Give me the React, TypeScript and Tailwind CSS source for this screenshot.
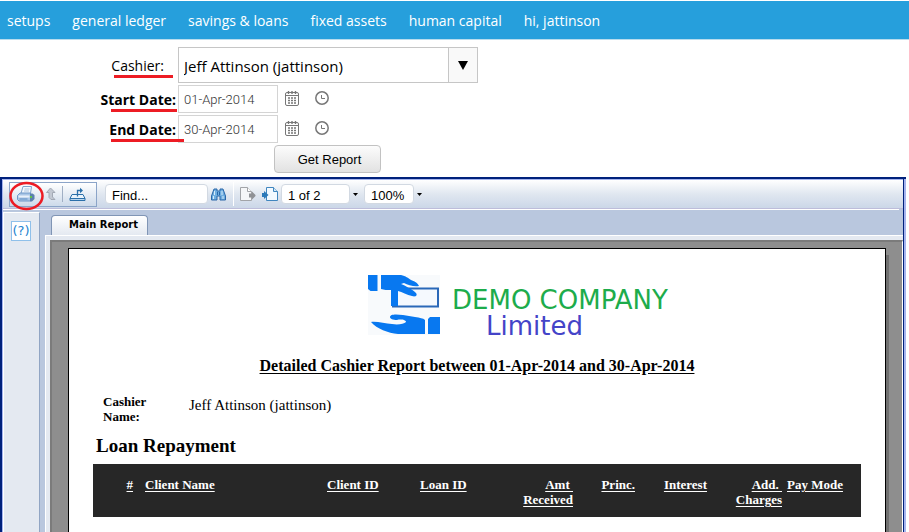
import React from "react";

const menu = ["setups", "general ledger", "savings & loans", "fixed assets", "human capital", "hi, jattinson"];

function CalendarIcon() {
  return (
    <svg width="14" height="15" viewBox="0 0 14 15" fill="none" stroke="#777" aria-hidden="true">
      <rect x="0.5" y="1.5" width="13" height="13" rx="1.5" />
      <path d="M1 4.5h12" />
      <path d="M3.5 0v3M7 0v3M10.5 0v3" strokeWidth="1.4" />
      <path d="M3 7h2M6 7h2M9 7h2M3 9.5h2M6 9.5h2M9 9.5h2M3 12h2M6 12h2M9 12h2" strokeWidth="1.4" />
    </svg>
  );
}

function ClockIcon() {
  return (
    <svg width="14" height="14" viewBox="0 0 14 14" fill="none" stroke="#777" aria-hidden="true">
      <circle cx="7" cy="7" r="6.2" strokeWidth="1.5" />
      <path d="M6.5 4v3.5h3.5" />
    </svg>
  );
}

function DateRow({ id, label, value, markClass }: { id: string; label: string; value: string; markClass: string }) {
  return (
    <div className="flex h-7 items-center">
      <div className="relative w-[178px] shrink-0 pr-0.5 text-right">
        <label htmlFor={id} className="text-sm font-bold text-black">{label}</label>
        <span className={markClass} />
      </div>
      <input
        id={id}
        defaultValue={value}
        className="h-7 w-[100px] border border-[#d4d4d4] bg-white px-[5px] font-['Roboto',sans-serif] text-[13px] font-light text-[#333] outline-none"
      />
      <div className="ml-[7px] flex items-center gap-4 pb-0.5">
        <button aria-label={"Open calendar, " + label}><CalendarIcon /></button>
        <button aria-label={"Open time list, " + label}><ClockIcon /></button>
      </div>
    </div>
  );
}

function PrintIcon() {
  return (
    <svg width="18" height="16" viewBox="0 0 18 16" aria-hidden="true">
      <path d="M4 7.500 6 .5h8.500l-1 7z" fill="#f3f8fd" stroke="#7ea3cc" />
      <path d="M7.500 3h5M7 5h5" stroke="#a9c4e0" />
      <path d="M.5 9.500 3 7h10.500V15H2L.5 13.500z" fill="#a9c6e6" stroke="#6f98c8" />
      <path d="M13 7.500h2.500l2 1.500v4L15 15.500h-2z" fill="#5a7fae" />
      <path d="M1.500 9.500h11v2h-11z" fill="#e8f1fa" />
      <path d="M2.500 13h8" stroke="#5f8fc4" />
      <rect x="13" y="10" width="2" height="2" fill="#5fc04a" />
    </svg>
  );
}

function UpIcon() {
  return (
    <svg width="10" height="14" viewBox="0 0 10 14" aria-hidden="true">
      <path d="M4.500 1 9 5.500H6.500V10l2.500 2.500H5L3 10.500v-5H.5z" fill="#c2c8d2" stroke="#a2a9b5" />
    </svg>
  );
}

function ExportIcon() {
  return (
    <svg width="17" height="15" viewBox="0 0 17 15" fill="none" stroke="#2b70aa" aria-hidden="true">
      <path d="M3 7.500h11l2 4H1z" fill="#e9f3fb" />
      <path d="M1 11.500h15v2H1z" fill="#b8d5ee" />
      <path d="M8.500 9.500v-6h4" strokeWidth="1.3" />
      <path d="m11 .8 3 2.700-3 2.700z" fill="#2b70aa" stroke="none" />
    </svg>
  );
}

function BinocularsIcon() {
  return (
    <svg width="15" height="13" viewBox="0 0 15 13" aria-hidden="true">
      <path d="M3 1h3v2h3V1h3l2.500 7v4H9V8H6v4H.5V8z" fill="#6faee0" stroke="#2a67a8" />
      <path d="M3.500 3v4M11 3v4M2.500 8v3M12 8v3" stroke="#d5ebfa" />
      <path d="M6.500 4v3M8.500 4v3" stroke="#2a67a8" />
    </svg>
  );
}

function PrevPageIcon() {
  return (
    <svg width="16" height="14" viewBox="0 0 16 14" aria-hidden="true">
      <path d="M.5.5h7l4 4v9H.5z" fill="#f5f6f8" stroke="#a2a4a8" />
      <path d="M7.500.5v4h4" fill="#fff" stroke="#a2a4a8" />
      <path d="M9 6.500h3V4.500L15.500 8v1L12 12.500v-2H9z" fill="#8f9195" />
    </svg>
  );
}

function NextPageIcon() {
  return (
    <svg width="16" height="14" viewBox="0 0 16 14" aria-hidden="true">
      <path d="M4.500.5h7l4 4v9h-11z" fill="#f2f9ff" stroke="#4086bf" />
      <path d="M11.500.5v4h4" fill="#d2e8f8" stroke="#4086bf" />
      <path d="M0 6h2V4l4.500 4L2 12v-2H0z" fill="#2b79b9" />
    </svg>
  );
}

function HandsLogo() {
  return (
    <svg className="shrink-0" width="72" height="60" viewBox="0 0 72 60" aria-hidden="true">
      <rect width="72" height="60" fill="#f8fafc" />
      <path d="M25 13.500h45v18H25z" fill="#f5f9fe" stroke="#2a68b8" strokeWidth="2" />
      <path d="M0 0h9.500v16H2.500L0 14z" fill="#0878f0" />
      <path d="M13 0h20c5 1 7 3 10 5 3 1 7 3 8 6-5 1-11-1-15-3l-3 1c5 2 12 6 15 9 2 3-1 4-4 3-5-1-10-4-14-5v15h-7V15c-4 0-7 0-10-1z" fill="#0878f0" />
      <path d="M22 42c0-3 6-3 13-2l12 2c5 1 8 1 10 3v14H30c-10-1-21-5-27-12 6-1 14 2 21 2 6 1 12 0 14-2 0-2-5-3-9-2-4 0-7-1-7-3z" fill="#0878f0" />
      <path d="M62 42h10v17H60V44z" fill="#0878f0" />
    </svg>
  );
}

function DropArrow() {
  return (
    <svg width="5" height="3" viewBox="0 0 5 3" aria-hidden="true"><path d="M0 0h5L2.500 3z" fill="#000" /></svg>
  );
}

function ReportPage() {
  return (
    <div className="relative ml-4 mr-4 mt-1.5 flex-1 border border-b-0 border-black bg-white px-6 font-['Liberation_Serif',serif] text-black">
      <span className="absolute -right-1 bottom-0 top-1.5 w-[3px] bg-[#707070]" />
      <div className="ml-[275px] mt-[26px] flex h-[67px] w-[306px] overflow-hidden whitespace-nowrap">
        <HandsLogo />
        <div className="ml-3 font-['DejaVu_Sans',sans-serif] text-[26px] leading-[26px]">
          <div className="pt-3 text-[#1dac4b]">DEMO COMPANY</div>
          <div className="pl-[34px] text-[#4444c8]">Limited</div>
        </div>
      </div>
      <h1 className="mt-[14px] text-center text-base font-bold leading-5 underline underline-offset-2">
        Detailed Cashier Report between 01-Apr-2014 and 30-Apr-2014
      </h1>
      <div className="mt-[18px] flex pl-[10px]">
        <div className="w-[86px] text-[13px] font-bold leading-[15px]">Cashier<br />Name:</div>
        <div className="pt-px text-[15px] leading-5">Jeff Attinson (jattinson)</div>
      </div>
      <h2 className="mt-[10px] pl-[3px] text-[19px] font-bold leading-6">Loan Repayment</h2>
      <table className="mt-1.5 h-[53px] w-full table-fixed bg-[#272727] text-[13px] leading-[15px] text-white">
        <thead>
          <tr className="align-top underline underline-offset-2 [&>th]:px-0 [&>th]:pt-[13px]">
            <th className="w-10 text-right">#</th>
            <th className="text-left"><span className="ml-3">Client Name</span></th>
            <th className="w-[93px] text-left">Client ID</th>
            <th className="w-20 text-left">Loan ID</th>
            <th className="w-[73px] text-right">Amt&nbsp;<br />Received</th>
            <th className="w-[62px] text-right">Princ.</th>
            <th className="w-[72px] text-right">Interest</th>
            <th className="w-[75px] text-right">Add.&nbsp;<br />Charges</th>
            <th className="w-[79px] text-left"><span className="ml-[5px]">Pay Mode</span></th>
          </tr>
        </thead>
      </table>
    </div>
  );
}

function Viewer() {
  return (
    <section className="mr-[3px] mt-1 flex flex-1 border-l-2 border-t-2 border-[#00217c]">
      <div className="flex min-w-0 flex-1 flex-col border-l border-t border-[#a5b4ee] bg-[#b9c7de] font-['Liberation_Sans',sans-serif] text-[13px] text-black">
        <div className="flex h-[29px] shrink-0 items-center border-b border-[#bdbdda] bg-linear-to-b from-white via-[#e0e7f0] to-[#cbd7e8] pl-1.5">
          <div className="relative flex h-[25px] w-[88px] items-center border border-[#8ba4c8] bg-linear-to-b from-white to-[#cddaea] pl-[7px]">
            <button aria-label="Print report"><PrintIcon /></button>
            <svg className="pointer-events-none absolute -left-px -top-0.5" width="36" height="30" viewBox="0 0 36 30" aria-hidden="true">
              <ellipse cx="17.500" cy="15" rx="16" ry="13" fill="none" stroke="#ed1c24" strokeWidth="2.500" />
            </svg>
            <button aria-label="Go to parent" className="ml-[11px]"><UpIcon /></button>
            <span className="ml-1.5 h-4 w-px bg-[#a0afc4]" />
            <button aria-label="Export" className="ml-1.5"><ExportIcon /></button>
          </div>
          <input aria-label="Find" defaultValue="Find..." className="ml-2 h-5 w-[103px] rounded-sm border border-[#d2d9e2] bg-white px-1.5 pt-0.5 outline-none" />
          <button aria-label="Search" className="ml-[3px]"><BinocularsIcon /></button>
          <span className="ml-[7px] h-6 w-px bg-white" />
          <button aria-label="Previous page" className="ml-1.5"><PrevPageIcon /></button>
          <button aria-label="Next page" className="ml-1.5"><NextPageIcon /></button>
          <input aria-label="Page" defaultValue="1 of 2" className="ml-[3px] h-5 w-[69px] rounded-sm border border-[#d2d9e2] bg-white px-1.5 pt-0.5 outline-none" />
          <button aria-label="Choose page" className="ml-0.5 p-px"><DropArrow /></button>
          <input aria-label="Zoom" defaultValue="100%" className="ml-[5px] h-5 w-[50px] rounded-sm border border-[#d2d9e2] bg-white px-1.5 pt-0.5 outline-none" />
          <button aria-label="Choose zoom" className="ml-0.5 p-px"><DropArrow /></button>
        </div>
        <div className="mr-1 h-px shrink-0 bg-white" />
        <div className="flex flex-1 pt-0.5">
          <div className="w-[37px] shrink-0 border-l border-r border-t border-l-white border-r-[#91a5c4] border-t-white bg-[#e4e9f1] pl-[7px] pt-2">
            <button aria-label="Help" className="flex h-5 w-5 items-center justify-center border border-[#8fc0ea] bg-white font-['DejaVu_Sans',sans-serif] text-[13px] text-[#2383cf]">(?)</button>
          </div>
          <div className="ml-[5px] flex min-w-0 flex-1 flex-col">
            <div className="flex h-[23px] shrink-0 items-end pl-1.5">
              <button className="h-5 w-[97px] rounded-t-sm border border-b-0 border-[#8095b5] bg-linear-to-b from-white to-[#e4e9f1] pb-0.5 pl-2 font-['DejaVu_Sans',sans-serif] text-[10px] font-bold">Main Report</button>
            </div>
            <div className="flex flex-1 flex-col border-l border-t border-white bg-[#e4e9f1] pl-1 pt-1">
              <div className="flex flex-1 flex-col border-l-2 border-r border-t-2 border-l-[#7b7b7b] border-r-white border-t-[#7b7b7b] bg-[#8e8e8e]">
                <ReportPage />
              </div>
            </div>
          </div>
        </div>
      </div>
      <div className="-mt-0.5 w-[3px] border-l border-t-2 border-[#00217c] bg-[#a5b4ee]" />
    </section>
  );
}

export default function App() {
  return (
    <main className="flex min-h-screen flex-col bg-white font-['Open_Sans',sans-serif]">
      <nav className="mt-px flex h-[39px] items-center gap-[22px] whitespace-nowrap border-b border-[#b8dced] bg-[#269fdc] pl-[7px] pt-0.5 text-sm text-white">
        {menu.map((item) => (
          <a key={item} href="#">{item}</a>
        ))}
      </nav>
      <form className="mt-[7px] flex flex-col gap-0.5" onSubmit={(e) => e.preventDefault()}>
        <div className="flex h-9 items-center">
          <div className="relative w-[178px] shrink-0 pr-[14px] text-right">
            <label htmlFor="cashier" className="text-sm text-black">Cashier:</label>
            <span className="absolute -bottom-px right-[5px] h-[3px] w-[59px] bg-[#ed1c24]" />
          </div>
          <div className="relative flex h-9 w-[300px] border border-[#c6c6c6]">
            <select id="cashier" className="w-full appearance-none bg-white px-[5px] pt-0.5 text-[15px] text-black outline-none">
              <option>Jeff Attinson (jattinson)</option>
            </select>
            <span className="pointer-events-none absolute inset-y-0 right-0 flex w-[29px] items-center justify-center border-l border-[#c6c6c6] bg-[#f9f9f9]">
              <svg width="10" height="9" viewBox="0 0 10 9" aria-hidden="true"><path d="M0 0h10L5 9z" fill="#000" /></svg>
            </span>
          </div>
        </div>
        <DateRow id="start" label="Start Date:" value="01-Apr-2014" markClass="absolute -bottom-px right-px h-[3px] w-[66px] bg-[#ed1c24]" />
        <DateRow id="end" label="End Date:" value="30-Apr-2014" markClass="absolute -bottom-px -right-1.5 h-[3px] w-[73px] bg-[#ed1c24]" />
        <div className="pl-[274px]">
          <button className="block h-7 w-[107px] rounded-sm border border-[#c2c2c2] bg-linear-to-b from-[#fcfcfc] to-[#e2e2e2] pl-1 pt-0.5 font-['Liberation_Sans',sans-serif] text-[13px] text-black">Get Report</button>
        </div>
      </form>
      <Viewer />
    </main>
  );
}
